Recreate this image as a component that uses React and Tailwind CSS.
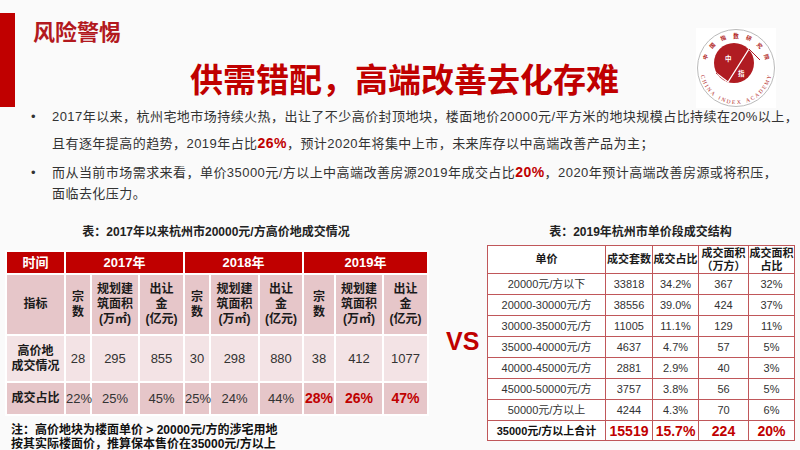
const W = { C: 0.667, H: 0.722, I: 0.333, N: 0.722, A: 0.722, " ": 0.4, D: 0.722, E: 0.611, X: 0.722, M: 0.889, Y: 0.722 };

function Logo() {
  const cx = 40;
  const cy = 40;
  const top = "中国指数研究院".split("");
  const topEls = top.map((ch, i) => {
    const a = -160 + (i * 140) / (top.length - 1);
    const r = 32.5;
    const rad = (a * Math.PI) / 180;
    const x = cx + r * Math.cos(rad);
    const y = cy + r * Math.sin(rad);
    return (
      <text
        key={"t" + i}
        x={x}
        y={y}
        fontSize="5.5"
        fill="#b01c22"
        fontFamily="Noto Sans CJK SC, sans-serif"
        fontWeight="700"
        textAnchor="middle"
        dominantBaseline="central"
        transform={`rotate(${a + 90} ${x} ${y})`}
      >
        {ch}
      </text>
    );
  });
  const bot = "CHINA INDEX ACADEMY".split("");
  const gap = 0.25;
  const total = bot.reduce((s, c) => s + W[c], 0) + gap * (bot.length - 1);
  let acc = 0;
  const botEls = bot.map((ch, i) => {
    const center = acc + W[ch] / 2;
    acc += W[ch] + gap;
    if (ch === " ") return null;
    const a = 168 - (center / total) * 156;
    const r = 34;
    const rad = (a * Math.PI) / 180;
    const x = cx + r * Math.cos(rad);
    const y = cy + r * Math.sin(rad);
    return (
      <text
        key={"b" + i}
        x={x}
        y={y}
        fontSize="5.5"
        fill="#b01c22"
        fontFamily="Liberation Serif, serif"
        textAnchor="middle"
        dominantBaseline="central"
        transform={`rotate(${a - 90} ${x} ${y})`}
      >
        {ch}
      </text>
    );
  });
  return (
    <svg width="80" height="80" viewBox="0 0 80 80" className="mt-[15px] mr-[24px] shrink-0">
      <defs>
        <clipPath id="innerClip">
          <circle cx="38" cy="35" r="20" />
        </clipPath>
      </defs>
      <rect x="0" y="0" width="80" height="80" fill="#ffffff" />
      <circle cx="40" cy="40" r="38.5" fill="none" stroke="#a8a8a8" strokeWidth="0.8" />
      {topEls}
      {botEls}
      <circle cx="38" cy="35" r="20" fill="#b01c22" />
      <polyline points="20,45 32,54 53,21 64,32" fill="none" stroke="#b01c22" strokeWidth="1" />
      <polyline points="20,45 32,54 53,21 64,32" fill="none" stroke="#ffffff" strokeWidth="1.3" clipPath="url(#innerClip)" />
      <text x="29" y="33" fontSize="6.5" fill="#ffffff" fontFamily="Noto Sans CJK SC, sans-serif" fontWeight="700">中</text>
      <text x="42" y="48" fontSize="6.5" fill="#ffffff" fontFamily="Noto Sans CJK SC, sans-serif" fontWeight="700">指</text>
    </svg>
  );
}

const lc = "border-2 border-white p-0 text-center align-middle";
const rc = "border border-[#c0575a] p-0 text-center align-middle";

function LeftTable() {
  const hdr = lc + " bg-[#c00000] text-white font-bold text-[13px] leading-[15px]";
  const sub = lc + " bg-[#e6c6c9] text-[#1a1a1a] font-bold text-[12px] leading-[15px]";
  const mid = lc + " bg-[#f3e3e5] text-[#333] text-[13px] leading-[15px]";
  const bot = lc + " bg-[#e6c6c9] text-[#333] text-[13px] leading-[15px]";
  const red = lc + " bg-[#e6c6c9] text-[#c00000] font-bold text-[14px] leading-[15px]";
  const subCols = [
    <>宗<br />数</>,
    <>规划建<br />筑面积<br />(万㎡)</>,
    <>出让<br />金<br />(亿元)</>,
  ];
  return (
    <table className="table-fixed border-collapse w-[422px]">
      <colgroup>
        <col className="w-[59px]" />
        <col className="w-[26px]" />
        <col className="w-[48px]" />
        <col className="w-[45px]" />
        <col className="w-[26px]" />
        <col className="w-[49px]" />
        <col className="w-[44px]" />
        <col className="w-[32px]" />
        <col className="w-[48px]" />
        <col className="w-[45px]" />
      </colgroup>
      <tbody>
        <tr className="h-[23px]">
          <td className={hdr}>时间</td>
          <td className={hdr} colSpan={3}>2017年</td>
          <td className={hdr} colSpan={3}>2018年</td>
          <td className={hdr} colSpan={3}>2019年</td>
        </tr>
        <tr className="h-[61px]">
          <td className={sub}>指标</td>
          {[0, 1, 2].map((g) =>
            subCols.map((c, i) => (
              <td key={g + "-" + i} className={sub}>{c}</td>
            ))
          )}
        </tr>
        <tr className="h-[47px]">
          <td className={lc + " bg-[#f3e3e5] text-[#1a1a1a] font-bold text-[12px] leading-[15px]"}>高价地<br />成交情况</td>
          {["28", "295", "855", "30", "298", "880", "38", "412", "1077"].map((v, i) => (
            <td key={i} className={mid}>{v}</td>
          ))}
        </tr>
        <tr className="h-[33px]">
          <td className={lc + " bg-[#e6c6c9] text-[#1a1a1a] font-bold text-[12px] leading-[15px]"}>成交占比</td>
          {["22%", "25%", "45%", "25%", "24%", "44%"].map((v, i) => (
            <td key={i} className={bot}>{v}</td>
          ))}
          {["28%", "26%", "47%"].map((v, i) => (
            <td key={"r" + i} className={red}>{v}</td>
          ))}
        </tr>
      </tbody>
    </table>
  );
}

function RightTable() {
  const rows = [
    ["20000元/方以下", "33818", "34.2%", "367", "32%"],
    ["20000-30000元/方", "38556", "39.0%", "424", "37%"],
    ["30000-35000元/方", "11005", "11.1%", "129", "11%"],
    ["35000-40000元/方", "4637", "4.7%", "57", "5%"],
    ["40000-45000元/方", "2881", "2.9%", "40", "3%"],
    ["45000-50000元/方", "3757", "3.8%", "56", "5%"],
    ["50000元/方以上", "4244", "4.3%", "70", "6%"],
  ];
  const hd = rc + " font-bold text-[11px] leading-[13px] text-[#1a1a1a]";
  const dc = rc + " text-[11px] leading-[13px] text-[#333]";
  const tr = rc + " font-bold text-[14px] leading-[16px] text-[#c00000]";
  return (
    <table className="table-fixed border-collapse w-[307px] bg-white">
      <colgroup>
        <col className="w-[118px]" />
        <col className="w-[47px]" />
        <col className="w-[46px]" />
        <col className="w-[50px]" />
        <col className="w-[46px]" />
      </colgroup>
      <tbody>
        <tr className="h-[28px]">
          <td className={hd}>单价</td>
          <td className={hd}>成交套数</td>
          <td className={hd}>成交占比</td>
          <td className={hd}>成交面积<br />（万方）</td>
          <td className={hd}>成交面积<br />占比</td>
        </tr>
        {rows.map((r, i) => (
          <tr key={i} className="h-[21px]">
            {r.map((v, j) => (
              <td key={j} className={dc}>{v}</td>
            ))}
          </tr>
        ))}
        <tr className="h-[20px]">
          <td className={rc + " font-bold text-[11px] leading-[14px] text-[#111]"}>35000元/方以上合计</td>
          <td className={tr}>15519</td>
          <td className={tr}>15.7%</td>
          <td className={tr}>224</td>
          <td className={tr}>20%</td>
        </tr>
      </tbody>
    </table>
  );
}

export default function App() {
  return (
    <div className="w-[800px] h-[450px] overflow-hidden bg-[#fafafa] font-['Liberation_Sans','Noto_Sans_CJK_SC',sans-serif] text-[#333]">
      <div className="h-[104px] flex items-start pt-[13px]">
        <div className="w-[15px] h-[94px] bg-[#c00000] shrink-0" />
        <div className="flex-1 flex flex-col">
          <div className="ml-[18px] mt-[9px] text-[22px] leading-[22px] font-bold text-[#b2191e]">风险警惕</div>
          <div className="ml-[175px] mt-[20px] text-[33px] leading-[33px] font-bold text-[#c00000] whitespace-nowrap">
            供需错配，高端改善去化存难
          </div>
        </div>
        <Logo />
      </div>

      <div className="pl-[31px] text-[13px] text-[#333] tracking-[0.45px]">
        <div className="flex leading-[26px]">
          <span className="w-[21px] shrink-0">•</span>
          <div className="whitespace-nowrap">
            2017年以来，杭州宅地市场持续火热，出让了不少高价封顶地块，楼面地价20000元/平方米的地块规模占比持续在20%以上，
            <br />
            且有逐年提高的趋势，2019年占比<span className="text-[14px] font-bold text-[#c00000]">26%</span>，预计2020年将集中上市，未来库存以中高端改善产品为主；
          </div>
        </div>
        <div className="flex leading-[21px] mt-[5px]">
          <span className="w-[21px] shrink-0">•</span>
          <div className="whitespace-nowrap">
            而从当前市场需求来看，单价35000元/方以上中高端改善房源2019年成交占比<span className="text-[14px] font-bold text-[#c00000]">20%</span>，2020年预计高端改善房源或将积压，
            <br />
            面临去化压力。
          </div>
        </div>
      </div>

      <div className="mt-[20px] flex items-start">
        <div className="ml-[5px] w-[422px] flex flex-col">
          <div className="text-center text-[12px] leading-[16px] font-bold text-[#222] mb-[10px]">
            表：2017年以来杭州市20000元/方高价地成交情况
          </div>
          <LeftTable />
          <div className="mt-[7px] ml-[6px] text-[12px] leading-[14px] font-bold text-[#111]">
            注：高价地块为楼面单价 &gt; 20000元/方的涉宅用地
            <br />
            按其实际楼面价，推算保本售价在35000元/方以上
          </div>
        </div>
        <div className="w-[60px] pt-[104px] pl-[19px] text-[25px] leading-[26px] font-bold text-[#c00000]">VS</div>
        <div className="w-[307px] flex flex-col">
          <div className="text-center text-[12px] leading-[16px] font-bold text-[#222] mb-[5px]">
            表：2019年杭州市单价段成交结构
          </div>
          <RightTable />
        </div>
      </div>
    </div>
  );
}
